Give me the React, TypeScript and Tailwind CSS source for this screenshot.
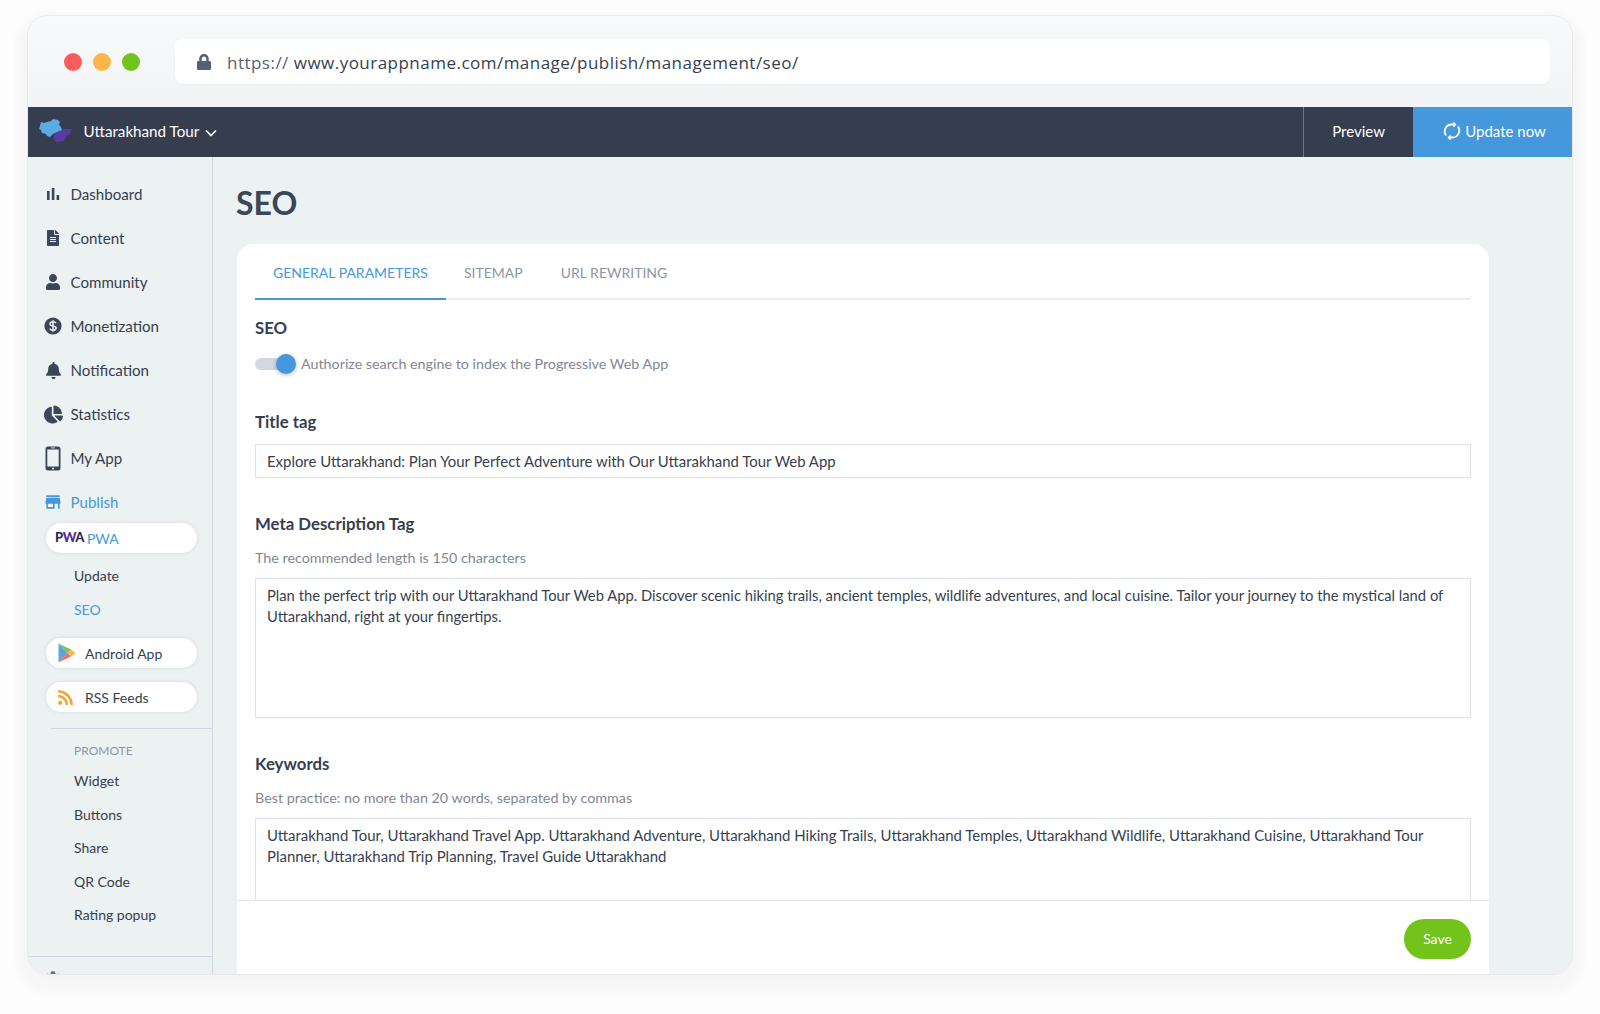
import React from "react";
import { FaFileAlt, FaUser, FaBell, FaChartPie, FaLock, FaCog, FaRss } from "react-icons/fa";
import { MdStore } from "react-icons/md";

const ink = "text-[#363f4f]";

function Bars() {
  return (
    <svg width="14" height="14" viewBox="0 0 14 14" fill="#3b4658">
      <rect x="1" y="4" width="2.6" height="9" />
      <rect x="5.8" y="1" width="2.6" height="12" />
      <rect x="10.6" y="8" width="2.6" height="5" />
    </svg>
  );
}

function Dollar() {
  return (
    <svg width="18" height="18" viewBox="0 0 18 18">
      <circle cx="9" cy="9" r="8.6" fill="#3b4658" />
      <path d="M12 6.2c-.5-1-1.600-1.500-3-1.500-1.700 0-3 .8-3 2.200 0 3 6.100 1.400 6.100 4.200 0 1.400-1.400 2.200-3.100 2.200-1.500 0-2.700-.6-3.200-1.700M9 3.200v11.600" fill="none" stroke="#ecf1f2" strokeWidth="1.500" />
    </svg>
  );
}

function Phone() {
  return (
    <svg width="16" height="25" viewBox="0 0 16 25">
      <rect x="0.500" y="0.500" width="15" height="24" rx="2.500" fill="#3b4658" />
      <rect x="2.300" y="3.500" width="11.400" height="17" fill="#ecf1f2" />
      <circle cx="8" cy="22.600" r="1" fill="#ecf1f2" />
      <rect x="6" y="1.500" width="4" height="0.800" fill="#ecf1f2" />
    </svg>
  );
}

function MapLogo() {
  return (
    <svg width="34" height="24" viewBox="0 0 34 24">
      <path d="M16 14l8-4 9 0-3 6-3 1-2 5-8 1-3-4z" fill="#5b3aa6" />
      <path d="M1 7l1-4 3 1 3-1 4-1 2-2 5 1 2 2-1 3 2 2 1 3-5 2-4 2-3 3-3-1-1-2-4-1-1-3-2-1z" fill="#5aace4" />
    </svg>
  );
}

function PlayLogo() {
  return (
    <svg width="18" height="20" viewBox="0 0 18 20">
      <path d="M0.500 0.500L9.500 10L0.500 19.500z" fill="#5aa7e0" />
      <path d="M0.500 0.500L13 6.500L9.500 10z" fill="#7dc242" />
      <path d="M0.500 19.500L13 13.500L9.500 10z" fill="#ef6f66" />
      <path d="M13 6.500L17.500 10L13 13.500L9.500 10z" fill="#f8b84a" />
    </svg>
  );
}

function NavItem({ icon, label, active }: { icon: React.ReactNode; label: string; active?: boolean }) {
  return (
    <div className="flex h-[44px] items-center">
      <div className={`flex w-[22px] justify-center ${active ? "text-[#4598db]" : "text-[#3b4658]"}`}>{icon}</div>
      <span className={`ml-[6.500px] text-[15.100px] ${active ? "text-[#4598db]" : ink}`}>{label}</span>
    </div>
  );
}

function Pill({ children }: { children: React.ReactNode }) {
  return (
    <div className="flex h-[30px] w-[151px] items-center rounded-full bg-white shadow-[0_0_4px_rgba(0,0,0,0.10)]">
      {children}
    </div>
  );
}

function SubItem({ label, active }: { label: string; active?: boolean }) {
  return (
    <div className={`flex h-[33.500px] items-center pl-[30px] text-[14px] ${active ? "text-[#4598db]" : ink}`}>{label}</div>
  );
}

function Sidebar() {
  return (
    <aside className="flex w-[185px] shrink-0 flex-col border-r border-[#cfd8e0] pt-[15px]">
      <div className="pl-[14px]">
        <NavItem icon={<Bars />} label="Dashboard" />
        <NavItem icon={<FaFileAlt size={16} />} label="Content" />
        <NavItem icon={<FaUser size={16} />} label="Community" />
        <NavItem icon={<Dollar />} label="Monetization" />
        <NavItem icon={<FaBell size={17} />} label="Notification" />
        <NavItem icon={<FaChartPie size={19} />} label="Statistics" />
        <NavItem icon={<Phone />} label="My App" />
        <NavItem icon={<MdStore size={20} />} label="Publish" active />
      </div>
      <div className="-mt-[1px] pl-[18px]">
        <Pill>
          <span className="ml-[9px] text-[13px] font-black tracking-[-0.5px] text-[#2e2b45]">
            P<span className="text-[#5a2d91]">W</span>A
          </span>
          <span className="ml-[3px] text-[14px] text-[#4598db]">PWA</span>
        </Pill>
      </div>
      <div className="mt-[6px] pl-[16px]">
        <SubItem label="Update" />
        <SubItem label="SEO" active />
      </div>
      <div className="mt-[12px] flex flex-col gap-[14px] pl-[18px]">
        <Pill>
          <span className="ml-[12px]"><PlayLogo /></span>
          <span className={`ml-[9px] text-[14px] ${ink}`}>Android App</span>
        </Pill>
        <Pill>
          <span className="ml-[11px] text-[#f4a63c]"><FaRss size={17} /></span>
          <span className={`ml-[11px] text-[14px] ${ink}`}>RSS Feeds</span>
        </Pill>
      </div>
      <div className="mt-[16px] ml-[23px] border-t border-[#cfd8e0]" />
      <div className="pl-[16px]">
        <div className="mt-[13px] flex h-[18px] items-center pl-[30px] text-[12px] text-[#8d96a3]">PROMOTE</div>
        <div className="mt-[4px]">
          <SubItem label="Widget" />
          <SubItem label="Buttons" />
          <SubItem label="Share" />
          <SubItem label="QR Code" />
          <SubItem label="Rating popup" />
        </div>
      </div>
      <div className="mt-[24px] border-t border-[#cfd8e0]" />
      <div className="flex items-center pt-[11px] pl-[17px] text-[#6b7482]">
        <FaCog size={16} />
        <span className="ml-[8px] text-[15px]">Settings</span>
      </div>
    </aside>
  );
}

function Label({ children }: { children: React.ReactNode }) {
  return <div className="text-[16.800px] leading-[20px] font-bold text-[#363f4f]">{children}</div>;
}

function Help({ children }: { children: React.ReactNode }) {
  return <div className="text-[14.300px] leading-[18px] text-[#7f8794]">{children}</div>;
}

function Field({ children, className }: { children: React.ReactNode; className: string }) {
  return (
    <div className={`border border-[#dfe3e8] px-[11px] leading-[21px] text-[#363f4f] ${className}`}>
      {children}
    </div>
  );
}

function Card() {
  return (
    <div className="relative mt-[18px] flex h-[800px] w-[1252px] flex-col overflow-hidden rounded-t-[16px] bg-white">
      <div className="mx-[18px] flex h-[56px] border-b-2 border-[#ebedef] text-[14px]">
        <div className="-mb-[2px] flex h-[56px] items-center border-b-2 border-[#4598db] px-[18px] pt-[2px] text-[#4598db]">
          GENERAL PARAMETERS
        </div>
        <div className="flex h-[54px] items-center px-[18px] pt-[2px] text-[#8d96a3]">SITEMAP</div>
        <div className="ml-[2px] flex h-[54px] items-center px-[18px] pt-[2px] text-[#8d96a3]">URL REWRITING</div>
      </div>
      <div className="px-[18px]">
        <div className="mt-[18px]"><Label>SEO</Label></div>
        <div className="mt-[14px] flex h-[24px] items-center">
          <div className="relative h-[12px] w-[36px] rounded-full bg-[#d2d8df]">
            <div className="absolute top-[-4px] right-[-5px] h-[20px] w-[20px] rounded-full bg-[#4598db] shadow-[0_1px_4px_rgba(0,0,0,0.30)]" />
          </div>
          <span className="ml-[10px] text-[14.300px] text-[#7f8794]">Authorize search engine to index the Progressive Web App</span>
        </div>
        <div className="mt-[36px]"><Label>Title tag</Label></div>
        <Field className="mt-[12px] flex h-[34px] items-center text-[14.920px]">
          Explore Uttarakhand: Plan Your Perfect Adventure with Our Uttarakhand Tour Web App
        </Field>
        <div className="mt-[36px]"><Label>Meta Description Tag</Label></div>
        <div className="mt-[15px]"><Help>The recommended length is 150 characters</Help></div>
        <Field className="mt-[11px] h-[140px] pt-[6px] text-[14.750px]">
          Plan the perfect trip with our Uttarakhand Tour Web App. Discover scenic hiking trails, ancient temples, wildlife adventures, and local cuisine. Tailor your journey to the mystical land of Uttarakhand, right at your fingertips.
        </Field>
        <div className="mt-[36px]"><Label>Keywords</Label></div>
        <div className="mt-[15px]"><Help>Best practice: no more than 20 words, separated by commas</Help></div>
        <Field className="mt-[11px] h-[100px] pt-[6px] text-[14.960px]">
          Uttarakhand Tour, Uttarakhand Travel App. Uttarakhand Adventure, Uttarakhand Hiking Trails, Uttarakhand Temples, Uttarakhand Wildlife, Uttarakhand Cuisine, Uttarakhand Tour Planner, Uttarakhand Trip Planning, Travel Guide Uttarakhand
        </Field>
      </div>
      <div className="absolute top-[656px] right-0 left-0 flex h-[100px] justify-end border-t border-[#e2e5e9] bg-white pt-[18px] pr-[18px]">
        <div className="flex h-[40px] w-[67px] items-center justify-center rounded-full bg-[#72c41a] pb-[1px] text-[14px] text-white">Save</div>
      </div>
    </div>
  );
}

export default function App() {
  return (
    <div className="h-[1014px] w-[1600px] overflow-hidden bg-[#fdfdfd] pt-[16px] pl-[28px] font-['Lato',sans-serif]">
      <div className="flex h-[958px] w-[1544px] flex-col overflow-hidden rounded-[20px] bg-[#f5f6f7] shadow-[0_0_0_1px_rgba(0,0,0,0.05),0_8px_10px_10px_rgba(0,0,0,0.03)]">
        <div className="flex h-[91px] shrink-0 items-start bg-gradient-to-b from-[#f9fafb] to-[#f2f3f4] pt-[23px]">
          <div className="flex h-[45px] w-[147px] items-center gap-[11px] pl-[36px]">
            <div className="h-[18px] w-[18px] rounded-full bg-[#fb5d5d]" />
            <div className="h-[18px] w-[18px] rounded-full bg-[#fbb548]" />
            <div className="h-[18px] w-[18px] rounded-full bg-[#72c41a]" />
          </div>
          <div className="flex h-[45px] w-[1375px] items-center rounded-[8px] bg-white shadow-[0_1px_2px_rgba(0,0,0,0.04)]">
            <span className="ml-[21px] text-[#566074]"><FaLock size={16} /></span>
            <span className="mt-[2px] ml-[15px] font-['Open_Sans',sans-serif] text-[17px] tracking-[0.48px] text-[#363f4f]">
              <span className="text-[#566074]">https://</span> www.yourappname.com/manage/publish/management/seo/
            </span>
          </div>
        </div>
        <header className="flex h-[50px] shrink-0 items-center bg-[#363d4e] text-white">
          <div className="ml-[11px] -mt-[2px]"><MapLogo /></div>
          <span className="mb-[2px] ml-[10.500px] text-[15.200px]">Uttarakhand Tour</span>
          <svg className="mt-[2px] ml-[6px]" width="12" height="8" viewBox="0 0 12 8" fill="none" stroke="white" strokeWidth="1.700">
            <path d="M1 1.500L6 6.500L11 1.500" />
          </svg>
          <div className="ml-auto flex h-full items-center border-l border-[#6d7686] pr-[28px] pb-[2px] pl-[28px] text-[15px]">Preview</div>
          <div className="flex h-full w-[159px] items-center justify-center gap-[4px] bg-[#4598db] pb-[2px] pl-[4px] text-[15px]">
            <svg width="18" height="20" viewBox="0 0 18 20" fill="none" stroke="white" strokeWidth="1.800">
              <path d="M3 14.500A7 7 0 0 1 9 3.500h2M15 5.500A7 7 0 0 1 9 16.500H7" />
              <path d="M10.500 0.500l3 3-3 3zM7.500 13.500l-3 3 3 3z" fill="white" stroke="none" />
            </svg>
            Update now
          </div>
        </header>
        <div className="flex min-h-0 flex-1 bg-[#ecf1f2]">
          <Sidebar />
          <main className="min-w-0 flex-1 pl-[24px]">
            <h1 className="mt-[23px] -ml-[1px] text-[32px] leading-[46px] font-bold text-[#3b4658]">SEO</h1>
            <Card />
          </main>
        </div>
      </div>
    </div>
  );
}
